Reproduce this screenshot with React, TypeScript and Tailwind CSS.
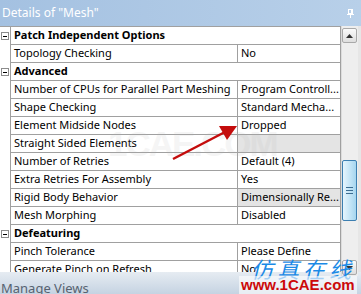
import React from "react";

type Row = { name: string; value?: string; section?: boolean; grey?: boolean };

const rows: Row[] = [
  { name: "Patch Independent Options", section: true },
  { name: "Topology Checking", value: "No" },
  { name: "Advanced", section: true },
  { name: "Number of CPUs for Parallel Part Meshing", value: "Program Controll..." },
  { name: "Shape Checking", value: "Standard Mecha..." },
  { name: "Element Midside Nodes", value: "Dropped" },
  { name: "Straight Sided Elements", value: "", grey: true },
  { name: "Number of Retries", value: "Default (4)" },
  { name: "Extra Retries For Assembly", value: "Yes" },
  { name: "Rigid Body Behavior", value: "Dimensionally Re...", grey: true },
  { name: "Mesh Morphing", value: "Disabled" },
  { name: "Defeaturing", section: true },
  { name: "Pinch Tolerance", value: "Please Define" },
  { name: "Generate Pinch on Refresh", value: "No" },
];

function Minus() {
  return (
    <div className="w-[8px] h-[8px] ml-[1px] border border-[#8c8c8c] bg-white flex items-center justify-center">
      <div className="w-[4px] h-[1px] bg-black" />
    </div>
  );
}

function GridRow({ row }: { row: Row }) {
  return (
    <div className="flex h-[18px]">
      <div className="w-[10px] flex items-center">{row.section && <Minus />}</div>
      {row.section ? (
        <div className="w-[331px] border-l border-r border-b border-[#a0a0a0] flex items-center pl-[3px] font-bold whitespace-nowrap overflow-hidden">
          {row.name}
        </div>
      ) : (
        <>
          <div className="w-[227px] border-l border-b border-[#a0a0a0] flex items-center pl-[3px] whitespace-nowrap overflow-hidden">
            {row.name}
          </div>
          <div
            className={`w-[104px] border-l border-r border-b border-[#a0a0a0] flex items-center pl-[3px] whitespace-nowrap overflow-hidden ${
              row.grey ? "bg-[#e4e4e4]" : "bg-white"
            }`}
          >
            {row.value}
          </div>
        </>
      )}
    </div>
  );
}

function ScrollButton({ up }: { up?: boolean }) {
  return (
    <div className="w-[15px] h-[15px] shrink-0 rounded-[2px] border border-[#a9a9a9] bg-gradient-to-b from-[#fbfbfb] to-[#dedede] flex items-center justify-center">
      <svg width="7" height="4" viewBox="0 0 7 4">
        {up ? <polygon points="3.5,0 7,4 0,4" fill="#333" /> : <polygon points="0,0 7,0 3.5,4" fill="#333" />}
      </svg>
    </div>
  );
}

export default function App() {
  return (
    <div
      className="relative w-[361px] h-[294px] overflow-hidden bg-white text-black text-[11px]"
      style={{ fontFamily: '"Noto Sans", "Liberation Sans", sans-serif' }}
    >
      <header className="h-[26px] bg-gradient-to-r from-[#a4c1e1] to-[#b8d0e9] flex items-center justify-between pl-[2px] pr-[7px]">
        <span className="text-white text-[12px]">Details of "Mesh"</span>
        <svg width="7" height="9" viewBox="0 0 7 9" className="mt-[1px]">
          <rect x="1.5" y="0.5" width="4" height="4" fill="none" stroke="#fff" />
          <rect x="4" y="1" width="1" height="3" fill="#fff" />
          <rect x="0" y="5" width="7" height="1" fill="#fff" />
          <rect x="3" y="6" width="1" height="3" fill="#fff" />
        </svg>
      </header>

      <div className="flex h-[246px]">
        <div className="w-[341px] border-t border-[#a0a0a0] overflow-hidden">
          {rows.map((r) => (
            <GridRow key={r.name} row={r} />
          ))}
        </div>
        <div className="w-[17px] h-[250px] bg-[#eeeeee] border-l border-[#dcdcdc] flex flex-col pt-[2px] relative z-10">
          <ScrollButton up />
          <div className="mt-[117px] w-[15px] h-[61px] rounded-[2px] border border-[#3c7fb1] bg-gradient-to-r from-[#e6f5fd] via-[#c6e6f7] to-[#a6d6ef] flex flex-col items-center justify-center gap-[2px]">
            <div className="w-[7px] h-[1px] bg-[#3c6d92]" />
            <div className="w-[7px] h-[1px] bg-[#3c6d92]" />
            <div className="w-[7px] h-[1px] bg-[#3c6d92]" />
          </div>
          <div className="mt-auto mb-[1px]">
            <ScrollButton />
          </div>
        </div>
        <div className="w-[3px] bg-[#e6e6e6]" />
      </div>

      <div className="h-[22px] bg-gradient-to-b from-[#e6ecf2] to-[#c5d3e2] pt-[8px] pl-[1px]">
        <span className="text-[13px] leading-[16px] text-[#566270]">Manage Views</span>
      </div>

      {/* watermark & annotation overlays */}
      <div
        className="absolute left-[108px] top-[118px] text-[35px] font-bold tracking-[-2px] text-[#b0b0b0] opacity-[0.12] pointer-events-none whitespace-nowrap"
        style={{ fontFamily: '"Liberation Sans", sans-serif' }}
      >
        1CAE.COM
      </div>
      <svg className="absolute left-0 top-0 pointer-events-none z-20" width="361" height="294">
        <line x1="173" y1="159" x2="225" y2="132" stroke="#c40c0c" strokeWidth="2.5" />
        <polygon points="237,126 219,126 227,140" fill="#c40c0c" />
      </svg>
      <div
        className="absolute z-20 left-[251px] top-[252px] text-[22px] italic text-[#1b8ae6] tracking-[4px] whitespace-nowrap pointer-events-none"
        style={{ fontFamily: '"Noto Sans CJK SC", sans-serif' }}
      >
        仿真在线
      </div>
      <div
        className="absolute z-20 left-[239px] top-[276px] px-[2px] text-[15px] font-bold text-[#cc0a0a] bg-white/60 whitespace-nowrap leading-[18px] pointer-events-none"
        style={{ fontFamily: '"Liberation Sans", sans-serif' }}
      >
        www.1CAE.com
      </div>
    </div>
  );
}
